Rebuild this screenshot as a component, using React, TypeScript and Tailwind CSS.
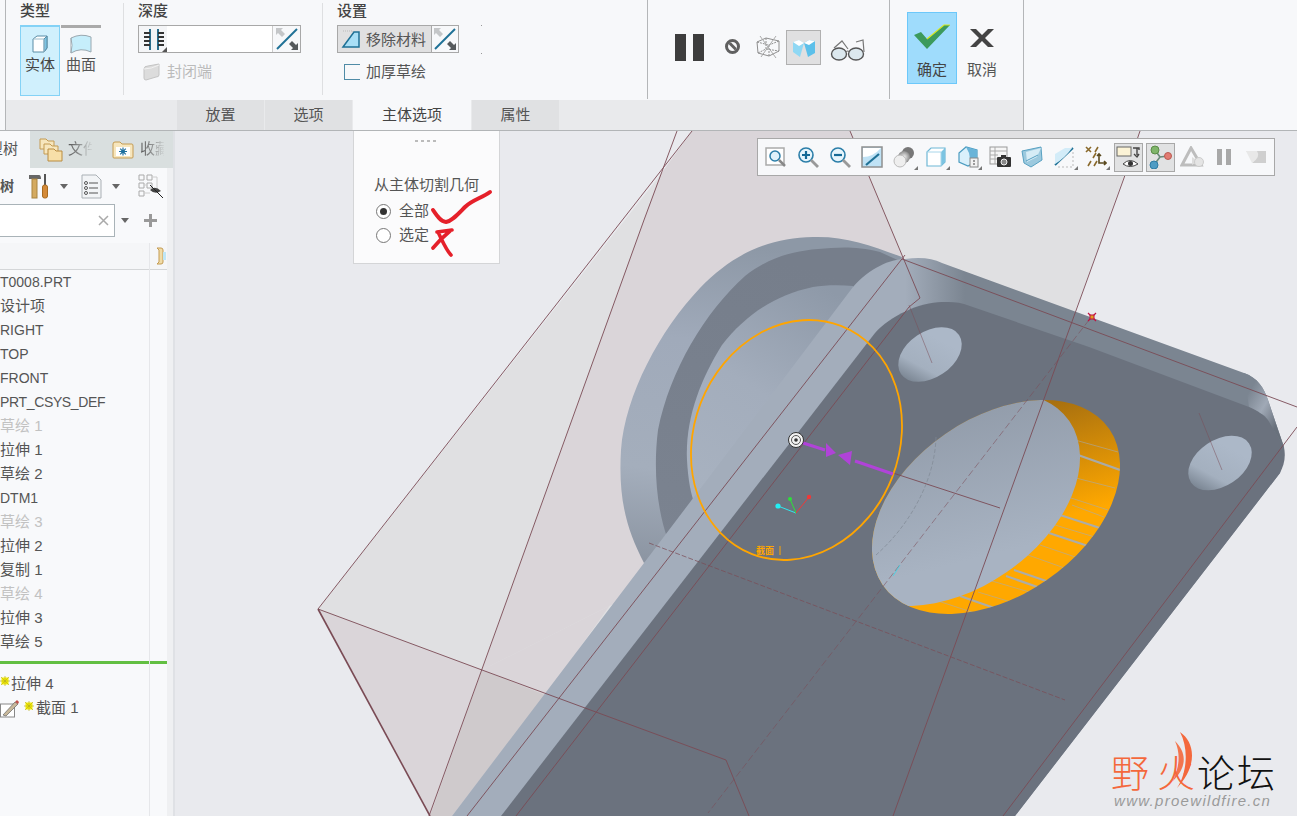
import React from "react";

const FONT = "[font-family:'Liberation_Sans','Noto_Sans_CJK_SC',sans-serif]";

function Flip() {
  return (
    <svg width="26" height="26" viewBox="0 0 26 26">
      <path d="M3 23 L23 3" stroke="#1f7196" strokeWidth="2" fill="none" />
      <path d="M2 2 L9 2 L7 4 L11 8 L8 11 L4 7 L2 9 Z" fill="#c4c6c8" />
      <path d="M24 24 L17 24 L19 22 L15 18 L18 15 L22 19 L24 17 Z" fill="#55595c" />
    </svg>
  );
}

function Caret({ className }: { className: string }) {
  return <div className={`border-x-[4px] border-t-[5px] border-x-transparent border-t-[#666] ${className}`} />;
}

function SolidIcon() {
  return (
    <svg width="20" height="20" viewBox="0 0 20 20">
      <path d="M3 5 L7 2 L17 2 L17 14 L14 18 L3 18 Z" fill="#fff" stroke="#5b8da6" />
      <path d="M14 5 L17 2 L17 14 L14 18 Z" fill="#7cc4e2" stroke="#5b8da6" />
      <path d="M3 5 L14 5 L14 18" fill="none" stroke="#9bbccb" />
    </svg>
  );
}

function SurfaceIcon() {
  return (
    <svg width="22" height="20" viewBox="0 0 22 20">
      <path d="M1 4 Q11 -1 21 3 L21 18 Q11 13 1 19 Z" fill="#c6eefb" stroke="#9aa8b0" />
      <path d="M1 4 Q3 11 1 19" fill="#fff" stroke="#9aa8b0" />
    </svg>
  );
}

function Depth() {
  return (
    <svg width="24" height="24" viewBox="0 0 24 24">
      <path d="M9 2 V23 M17 2 V23" stroke="#2c6e8c" strokeWidth="2" />
      <path d="M3 6H9M3 10H9M3 14H9M3 18H9M17 6H23M17 10H23M17 14H23M17 18H23" stroke="#333" strokeWidth="2" />
    </svg>
  );
}

function RemoveIcon() {
  return (
    <svg width="20" height="20" viewBox="0 0 20 20">
      <path d="M2 2 H12 V7" fill="none" stroke="#bbb" strokeDasharray="1 1" />
      <path d="M2 18 L13 3 H18 V18 Z" fill="#a9dff6" stroke="#1f7196" strokeWidth="1.5" />
    </svg>
  );
}

function Closed() {
  return (
    <svg width="18" height="18" viewBox="0 0 18 18">
      <path d="M1 6 Q1 3 5 3 L16 1 V12 Q16 14 13 14 L3 17 Q1 17 1 15 Z" fill="#dcdcdc" stroke="#c4c4c4" />
      <path d="M1 6 Q8 6 16 2" fill="none" stroke="#f2f2f2" />
    </svg>
  );
}

function Wire() {
  return (
    <svg width="26" height="24" viewBox="0 0 26 24" fill="none" stroke="#8f8f8f">
      <path d="M2 7 L11 3 L24 6 L24 16 L14 21 L3 18 Z" />
      <path d="M2 7 L14 10 L24 6 M14 10 V21 M11 3 V14 L3 18 M11 14 L24 16" strokeDasharray="2 1" />
      <path d="M5 1 L21 23 M21 1 L6 22" stroke="#aaa" />
    </svg>
  );
}

function Planes() {
  return (
    <svg width="24" height="20" viewBox="0 0 24 20">
      <path d="M1 4 L7 2 L12 5 L8 19 L1 14 Z" fill="#8fd8f4" />
      <path d="M12 5 L17 2 L23 3 L23 15 L16 19 Z" fill="#5cc0ea" />
      <path d="M1 4 L7 2 L12 5 L7 8 Z M12 5 L17 2 L23 3 L17 7 Z" fill="#fff" />
    </svg>
  );
}

function Glasses() {
  return (
    <svg width="36" height="24" viewBox="0 0 36 24" fill="none">
      <ellipse cx="9" cy="16" rx="7.5" ry="6" fill="#dce8ee" stroke="#555" strokeWidth="1.4" />
      <ellipse cx="26" cy="16" rx="7.5" ry="6" fill="#dce8ee" stroke="#555" strokeWidth="1.4" />
      <path d="M16 14 Q18 12 19 14 M4 10 L12 3 L18 11 M34 14 L33 2 L26 4" stroke="#777" strokeWidth="1.2" />
    </svg>
  );
}

const VIcons: React.ReactNode[] = [
  <svg key="1" width="22" height="22" viewBox="0 0 22 22" fill="none"><rect x="1" y="2" width="18" height="17" fill="#fff" stroke="#aaa" strokeWidth="1.5" /><circle cx="10" cy="10" r="5" fill="#dff2fb" stroke="#2b7ea8" strokeWidth="1.5" /><path d="M14 14 L20 20" stroke="#888" strokeWidth="2.5" /></svg>,
  <svg key="2" width="22" height="22" viewBox="0 0 22 22" fill="none"><circle cx="9" cy="9" r="7" fill="#e6f5fc" stroke="#2b7ea8" strokeWidth="1.6" /><path d="M5 9 H13 M9 5 V13" stroke="#156a96" strokeWidth="2.2" /><path d="M14 14 L21 21" stroke="#999" strokeWidth="2.8" /></svg>,
  <svg key="3" width="22" height="22" viewBox="0 0 22 22" fill="none"><circle cx="9" cy="9" r="7" fill="#e6f5fc" stroke="#2b7ea8" strokeWidth="1.6" /><path d="M5 9 H13" stroke="#156a96" strokeWidth="2.2" /><path d="M14 14 L21 21" stroke="#999" strokeWidth="2.8" /></svg>,
  <svg key="4" width="22" height="22" viewBox="0 0 22 22"><rect x="1" y="1" width="20" height="20" fill="#bfe2f5" stroke="#8f8f8f" strokeWidth="1.5" /><path d="M2 2 H20 Q12 11 2 11 Z" fill="#fff" /><path d="M5 19 L18 8" stroke="#1f7196" strokeWidth="2.2" /></svg>,
  <svg key="5" width="22" height="22" viewBox="0 0 22 22"><defs><radialGradient id="sph"><stop offset="0" stopColor="#f4f4f4" /><stop offset="1" stopColor="#8a8a8a" /></radialGradient></defs><circle cx="15" cy="7" r="6" fill="#777" /><circle cx="11" cy="11" r="6" fill="url(#sph)" /><circle cx="7" cy="15" r="6" fill="#eee" stroke="#bbb" /></svg>,
  <svg key="6" width="22" height="22" viewBox="0 0 22 22"><path d="M2 6 L6 2 L20 2 L20 16 L16 20 L2 20 Z" fill="#fff" stroke="#6fb7d6" strokeWidth="1.2" /><path d="M16 6 L20 2 L20 16 L16 20 Z" fill="#7cc4e2" /><path d="M2 6 H16 V20" fill="none" stroke="#a8d6ea" /></svg>,
  <svg key="7" width="22" height="22" viewBox="0 0 22 22"><path d="M2 7 L9 1 L20 4 L20 15 L11 20 L2 16 Z" fill="#d9f0fb" stroke="#4b9cc0" strokeWidth="1.2" /><path d="M9 1 L20 4 L20 13 L13 13 L12 7 Z" fill="#6ab4d8" /><rect x="13" y="12" width="8" height="9" fill="#f2f2f2" stroke="#888" /><path d="M16 15 H18 M16 18 H18" stroke="#444" /></svg>,
  <svg key="8" width="22" height="22" viewBox="0 0 22 22"><rect x="1" y="1" width="17" height="17" fill="#f6f6f6" stroke="#999" /><path d="M1 5 H18 M1 9 H9 M1 13 H9 M6 1 V18" stroke="#aaa" /><rect x="8" y="11" width="14" height="10" rx="1" fill="#333" /><rect x="12" y="9" width="5" height="3" fill="#333" /><circle cx="15" cy="16" r="3" fill="#888" stroke="#eee" /></svg>,
  <svg key="9" width="22" height="22" viewBox="0 0 22 22"><path d="M1 5 L20 1 L21 14 L10 21 L3 17 Z" fill="#9cc9de" stroke="#58a1c2" /><path d="M5 6 L20 2 L16 11 L6 16 Z" fill="#d6ecf6" /><path d="M5 15 L17 9" stroke="#58a1c2" /></svg>,
  <svg key="10" width="22" height="22" viewBox="0 0 22 22"><path d="M2 19 L20 2" stroke="#1f7196" strokeWidth="1.8" /><path d="M2 18 L2 8 L12 2 L19 2 Q12 12 2 18 Z" fill="#d3ecf8" /><path d="M5 21 H20 V6" stroke="#bbb" fill="none" strokeDasharray="2 2" /></svg>,
  <svg key="11" width="22" height="22" viewBox="0 0 22 22" stroke="#8a6a2c" strokeWidth="1.6" fill="none"><path d="M1 1 L6 6 M6 1 L1 6 M10 6 L13 1 M8 12 L11 7 M3 20 L6 15 M9 20 L12 15" /><path d="M14 8 V17 H21 M12 10 L14 8 L16 10 M19 15 L21 17 L19 19" stroke="#5a4a20" /></svg>,
  <svg key="12" width="24" height="24" viewBox="0 0 24 24"><rect x="1" y="2" width="14" height="9" fill="#fbf3d6" stroke="#666" /><path d="M17 3 H23 V5 M21 3 V10 M18 9 L21 12 L23 9" fill="none" stroke="#444" strokeWidth="1.4" /><path d="M7 19 Q14 12 22 19 Q14 24 7 19 Z" fill="#fff" stroke="#444" /><circle cx="14.5" cy="18.5" r="2.5" fill="#333" /></svg>,
  <svg key="13" width="24" height="24" viewBox="0 0 24 24"><path d="M7 5 L12 12 L6 20 M12 12 L20 11" stroke="#6b8a7a" strokeWidth="1.6" fill="none" /><circle cx="7" cy="5" r="4" fill="#7fb56a" stroke="#5a8c48" /><circle cx="20" cy="11" r="3.5" fill="#e27b72" stroke="#b85a52" /><circle cx="6" cy="20" r="4" fill="#4f9cc4" stroke="#2f7ca4" /></svg>,
  <svg key="14" width="24" height="22" viewBox="0 0 24 22"><path d="M11 2 L21 19 H2 Z" fill="none" stroke="#bdbdbd" strokeWidth="3" /><path d="M12 11 L18 15 L12 19 Z" fill="#ddd" /><circle cx="19" cy="16" r="4.5" fill="#e4e4e4" stroke="#ccc" /></svg>,
  <svg key="15" width="16" height="18" viewBox="0 0 16 18"><rect x="1" y="1" width="5" height="16" fill="#a8a8a8" /><rect x="10" y="1" width="5" height="16" fill="#a8a8a8" /></svg>,
  <svg key="16" width="22" height="18" viewBox="0 0 22 18"><path d="M1 3 H21 V15 H7 Q14 9 1 3 Z" fill="#cfcfcf" /><path d="M1 3 H12 Q16 9 7 15" fill="#e8e8e8" /></svg>,
];

const withMark = [4, 5, 6, 9, 10];

function ViewToolbar() {
  return (
    <div className="absolute left-[582px] top-[7px] flex h-[38px] w-[518px] items-center bg-[#f7f8fa] border border-[#a8a8a8] pl-[2px]">
      {VIcons.map((ic, i) => (
        <div key={i} className="relative flex h-[32px] w-[32px] shrink-0 items-center justify-center">
          {i === 11 || i === 12 ? (
            <div className="flex h-[29px] w-[29px] items-center justify-center bg-[#e1e2e3] border border-[#a8a8a8]">{ic}</div>
          ) : (
            ic
          )}
          {withMark.includes(i) ? (
            <div className="absolute bottom-[3px] right-[2px] border-b-[4px] border-l-[4px] border-b-[#777] border-l-transparent" />
          ) : null}
        </div>
      ))}
    </div>
  );
}

const stripes = [
  [1049, 533, 1091, 547], [1040, 545, 1084, 560], [1028, 555, 1070, 570], [1014, 570, 1052, 583],
  [992, 581, 1036, 594], [978, 592, 1024, 606], [960, 596, 1000, 610], [935, 600, 990, 618],
  [1075, 440, 1118, 452], [1078, 455, 1120, 470], [1076, 478, 1115, 488], [1068, 497, 1108, 510], [1060, 515, 1100, 528],
  [1072, 505, 1104, 517], [1055, 525, 1098, 538], [1006, 576, 1046, 590],
];

function Scene() {
  const L = "#7a4b55";
  return (
    <svg className="absolute inset-0 h-full w-full" viewBox="175 131 1122 685" preserveAspectRatio="none">
      <defs>
        <linearGradient id="bossG" gradientUnits="userSpaceOnUse" x1="700" y1="240" x2="660" y2="570">
          <stop offset="0" stopColor="#8d98a6" />
          <stop offset="0.3" stopColor="#a0aaba" />
          <stop offset="0.7" stopColor="#a4aebc" />
          <stop offset="1" stopColor="#8a93a0" />
        </linearGradient>
        <linearGradient id="ringG" gradientUnits="userSpaceOnUse" x1="750" y1="250" x2="660" y2="550">
          <stop offset="0" stopColor="#767e8b" />
          <stop offset="1" stopColor="#7b8390" />
        </linearGradient>
        <linearGradient id="innerG" gradientUnits="userSpaceOnUse" x1="830" y1="290" x2="700" y2="500">
          <stop offset="0" stopColor="#8e99a8" />
          <stop offset="0.5" stopColor="#a3adbc" />
          <stop offset="1" stopColor="#a8b2c0" />
        </linearGradient>
        <linearGradient id="bandG" gradientUnits="userSpaceOnUse" x1="905" y1="0" x2="965" y2="0">
          <stop offset="0" stopColor="#a3adbb" />
          <stop offset="1" stopColor="#7b8591" />
        </linearGradient>
        <linearGradient id="holeG" gradientUnits="userSpaceOnUse" x1="1000" y1="400" x2="940" y2="560">
          <stop offset="0" stopColor="#8f99a7" />
          <stop offset="1" stopColor="#a8b3c2" />
        </linearGradient>
        <linearGradient id="orG" gradientUnits="userSpaceOnUse" x1="1060" y1="400" x2="1090" y2="510">
          <stop offset="0" stopColor="#a8700f" />
          <stop offset="1" stopColor="#ffa800" />
        </linearGradient>
        <linearGradient id="h1G" gradientUnits="userSpaceOnUse" x1="897" y1="370" x2="945" y2="345">
          <stop offset="0" stopColor="#747f8c" />
          <stop offset="0.4" stopColor="#a4b0bf" />
          <stop offset="1" stopColor="#acb8c8" />
        </linearGradient>
        <linearGradient id="h2G" gradientUnits="userSpaceOnUse" x1="1187" y1="478" x2="1235" y2="453">
          <stop offset="0" stopColor="#747f8c" />
          <stop offset="0.4" stopColor="#a4b0bf" />
          <stop offset="1" stopColor="#acb8c8" />
        </linearGradient>
        <linearGradient id="cornerG" gradientUnits="userSpaceOnUse" x1="1250" y1="390" x2="1285" y2="410">
          <stop offset="0" stopColor="#7b8591" />
          <stop offset="0.5" stopColor="#a0a9b6" />
          <stop offset="1" stopColor="#69717c" />
        </linearGradient>
        <clipPath id="bigHole">
          <ellipse cx="996" cy="507" rx="137.5" ry="89" transform="rotate(-34.5 996 507)" />
        </clipPath>
      </defs>

      <rect x="175" y="131" width="1122" height="685" fill="#e9eaee" />
      <path d="M318 609 L695 131 L1140 131 L893 816 L430 816 Z" fill="#e0e0e2" />
      <path d="M660 175 L692 131 L850 131 L920 298 L700 560 L482 670 Z" fill="#dad5d9" />
      <path d="M482 670 L318 609 L430 816 Z" fill="#dad5d9" />
      <path d="M482 670 L700 560 L640 563 L460 816 L430 816 Z" fill="#dad5d9" />
      <path d="M482 670 L545 695 L452 816 L430 816 Z" fill="#cfcacc" />

      {/* boss */}
      <path d="M902 257 C870 245 845 236 813 237 C770 238 735 252 700 288 C660 330 625 395 621 450 C618 500 627 530 644 563 L700 540 L860 400 Z" fill="url(#bossG)" />
      <path d="M902 262 L880 252 C860 247 845 247 831 248 C800 250 775 253 745 276 C705 312 670 370 658 430 C653 470 657 510 668 540 L860 400 Z" fill="url(#ringG)" />
      <path d="M853 286 C840 285 825 285 813 287 C775 295 745 315 722 345 C700 380 685 420 687 460 C688 480 691 495 695 505 L870 380 Z" fill="url(#innerG)" />

      {/* outer silhouette: rib and edge band */}
      <path d="M452 816 L644 563 L853 287 C870 268 890 259 905 259 C920 257 932 258 942 263 L1244 373 C1258 378 1264 388 1268 400 L1284 447 L1280 473 L1015 816 Z" fill="url(#bandG)" />
      <path d="M1244 373 C1258 378 1264 388 1268 400 L1284 447 L1265 416 L1249 407 Z" fill="url(#cornerG)" />

      {/* plate face */}
      <path d="M501 816 L875 333 C890 316 920 302 942 302 C950 302 957 302 964 304 L1089 347 L1249 407 C1258 411 1264 415 1268 420 L1284 447 C1286 458 1284 465 1280 473 L1015 816 Z" fill="#6b727e" />

      {/* big hole */}
      <g clipPath="url(#bigHole)">
        <rect x="860" y="390" width="270" height="240" fill="url(#orG)" />
        {stripes.map((s, i) => (
          <line key={i} x1={s[0]} y1={s[1]} x2={s[2]} y2={s[3]} stroke="#a3adba" strokeWidth={i % 3 === 0 ? 2.2 : 1} opacity={i % 3 === 0 ? 0.9 : 0.55} />
        ))}
        <ellipse cx="956" cy="499" rx="137.5" ry="89" transform="rotate(-34.5 956 499)" fill="url(#holeG)" />
      </g>

      {/* small holes */}
      <ellipse cx="930" cy="354.5" rx="35" ry="23" transform="rotate(-34 930 354.5)" fill="url(#h1G)" />
      <ellipse cx="1220" cy="463" rx="35" ry="23" transform="rotate(-34 1220 463)" fill="url(#h2G)" />

      {/* datum lines */}
      <g fill="none" stroke={L} strokeWidth="0.9">
        <path d="M318 609 L692 131" />
        <path d="M429 816 L644 220 L677 131" />
        <path d="M318 609 L482 670 L726 760 L749 816" />
        <path d="M318 609 L430 816" strokeWidth="1.6" />
        <path d="M850 131 L920 298 L909 307" />
        <path d="M516 816 L909 307" />
        <path d="M467 816 L905 255" />
        <path d="M902 259 L1297 407" />
        <path d="M1140 131 L1124 178 L893 816" />
        <path d="M1297 427 L1003 816" />
        <path d="M649 543 L1065 700" strokeDasharray="5 2" opacity="0.8" />
        <path d="M893 473 L1000 508" />
        <path d="M1089 320 L708 813" strokeDasharray="7 3" opacity="0.6" />
        <path d="M909 305 L932 363" opacity="0.55" />
        <path d="M1199 413 L1222 470" opacity="0.55" />
      </g>
      <path d="M936 437 C935 480 910 525 876 555" fill="none" stroke="#7f8894" strokeWidth="0.7" strokeDasharray="4 2" />
      <path d="M900 565 L893 576" stroke="#38d8e8" strokeWidth="0.8" />

      {/* sketch */}
      <ellipse cx="796.5" cy="440" rx="122.4" ry="102.7" transform="rotate(-68.7 796.5 440)" fill="none" stroke="#ffa500" strokeWidth="1.8" />
      <text x="756" y="554" fontSize="9" fontWeight="700" fill="#ffa500" fontFamily="'Noto Sans CJK SC',sans-serif">截面</text>
      <path d="M780 546 V555" stroke="#ffa500" strokeWidth="1" />

      {/* arrows */}
      <path d="M797 441 L825 450 M893 474 L855 461" stroke="#b043d8" strokeWidth="3" />
      <path d="M836 453 L826 443 L826 457 Z M838 455 L852 451 L850 465 Z" fill="#b043d8" />
      <circle cx="796" cy="440" r="7.5" fill="#f2f2f2" stroke="#333" strokeWidth="1" />
      <circle cx="796" cy="440" r="4.5" fill="none" stroke="#555" strokeWidth="1" />
      <circle cx="796" cy="440" r="1.8" fill="#333" />

      {/* triad */}
      <path d="M796 513 L778 506" stroke="#2fe8ee" />
      <path d="M796 513 L790 499" stroke="#2ce03a" />
      <path d="M796 513 L809 497" stroke="#f03838" />
      <circle cx="778" cy="506" r="2.6" fill="#22f0f4" />
      <circle cx="790" cy="499" r="2" fill="#2ce03a" />
      <circle cx="809" cy="497" r="2.2" fill="#f03838" />

      {/* datum point */}
      <path d="M1088 313 L1096 321 M1096 313 L1088 321" stroke="#c01040" strokeWidth="1.2" />
      <rect x="1090" y="315" width="4" height="4" fill="#e0a020" stroke="#c01040" />
    </svg>
  );
}

function Handwriting() {
  return (
    <svg className="absolute left-[250px] top-[55px]" width="70" height="75" viewBox="425 186 70 75">
      <path d="M433 210 C437 216 441 222 446 222 C452 221 458 214 465 207 C472 200 482 198 490 192" fill="none" stroke="#e5202a" strokeWidth="4" strokeLinecap="round" />
      <path d="M437 232 L452 230 M450 231 C444 236 438 242 433 248 M438 232 C442 240 446 250 451 255" fill="none" stroke="#e5202a" strokeWidth="3.6" strokeLinecap="round" />
    </svg>
  );
}

function Watermark() {
  const cjk = "text-[38px] leading-[36px] [font-family:'Noto_Sans_CJK_SC',sans-serif] font-light block mt-[22px]";
  return (
    <div className="absolute left-[936px] top-[600px] h-[80px] w-[180px]">
      <div className="flex items-start">
        <span className={`${cjk} w-[43px] text-[#f4683c]`}>野</span>
        <span className={`${cjk} ml-[3px] w-[40px] text-[#f4683c]`}>火</span>
        <span className={`${cjk} w-[40px] text-[#111]`}>论</span>
        <span className={`${cjk} w-[40px] text-[#111]`}>坛</span>
      </div>
      <div className="absolute left-[3px] top-[62px] whitespace-nowrap text-[15px] italic leading-[15px] tracking-[1.3px] text-[#9a9a9a] [font-family:'Liberation_Sans',sans-serif]">www.proewildfire.cn</div>
      <svg className="absolute left-[52px] top-0" width="36" height="58" viewBox="0 0 36 58">
        <path d="M17 1 C33 12 34 36 14 57 C24 42 26 18 17 1 Z" fill="#f4683c" />
        <path d="M12 10 C24 22 24 36 10 50 C16 36 18 24 12 10 Z" fill="#f4683c" opacity="0.9" />
      </svg>
    </div>
  );
}

function Popup() {
  return (
    <div className={`absolute left-[178px] top-0 h-[133px] w-[147px] border border-t-0 border-[#d4d5d7] bg-[#fbfbfc] text-[15px] text-[#555] ${FONT}`}>
      <div className="flex justify-center gap-[3px] pr-[2px] pt-[9px]">
        <div className="h-[2px] w-[3px] bg-[#bbb]" />
        <div className="h-[2px] w-[3px] bg-[#bbb]" />
        <div className="h-[2px] w-[3px] bg-[#bbb]" />
        <div className="h-[2px] w-[3px] bg-[#bbb]" />
      </div>
      <div className="pl-[20px] pt-[32px] leading-[22px]">从主体切割几何</div>
      <div className="mt-[3px] flex h-[24px] items-center gap-[8px] pl-[22px]">
        <div className="flex h-[15px] w-[15px] items-center justify-center rounded-full border-[1.5px] border-[#777] bg-white">
          <div className="h-[7px] w-[7px] rounded-full bg-[#333]" />
        </div>
        <span>全部</span>
      </div>
      <div className="flex h-[24px] items-center gap-[8px] pl-[22px]">
        <div className="h-[15px] w-[15px] rounded-full border-[1.5px] border-[#777] bg-white" />
        <span>选定</span>
      </div>
    </div>
  );
}

function Ribbon() {
  return (
    <div className={`h-[131px] shrink-0 border-b-[1.5px] border-[#b2b5b7] bg-[#f7f8fa] pl-[5px] text-[15px] text-[#555] ${FONT}`}>
      <div className="flex h-full w-[1019px] flex-col border-x border-[#b4b6b8]">
        <div className="flex h-[100px]">
          {/* type */}
          <div className="relative w-[118px] pl-[14px]">
            <div className="h-[25px] pt-[2px] font-medium leading-[18px] text-[#444]">类型</div>
            <div className="flex gap-[1px]">
              <div className="flex h-[71px] w-[40px] flex-col items-center border border-t-[2px] border-[#84d2f6] bg-[#d0f0fd] pt-[7px] text-[#444]">
                <SolidIcon />
                <div className="mt-[1px] leading-[20px]">实体</div>
              </div>
              <div className="flex h-[71px] w-[40px] flex-col items-center border-t-[3px] border-[#aaa] pt-[6px]">
                <SurfaceIcon />
                <div className="mt-[1px] leading-[20px]">曲面</div>
              </div>
            </div>
            <div className="absolute right-0 top-[3px] h-[92px] w-px bg-[#dedfe1]" />
          </div>
          {/* depth */}
          <div className="relative w-[199px] pl-[14px]">
            <div className="h-[25px] pt-[2px] font-medium leading-[18px] text-[#444]">深度</div>
            <div className="flex h-[28px] w-[163px] items-center border border-[#a8a8a8] bg-white">
              <div className="relative flex h-full w-[28px] items-center justify-center bg-[#f4f5f7]">
                <Depth />
                <div className="absolute bottom-0 right-0 border-b-[5px] border-l-[5px] border-b-[#555] border-l-transparent" />
              </div>
              <div className="flex-1" />
              <div className="flex h-full w-[28px] items-center justify-center border-l border-[#ccc] bg-[#f7f8fa]">
                <Flip />
              </div>
            </div>
            <div className="mt-[9px] flex items-center gap-[6px] pl-[5px] text-[#bbb]">
              <Closed />
              <span className="leading-[20px]">封闭端</span>
            </div>
            <div className="absolute right-0 top-[3px] h-[92px] w-px bg-[#dedfe1]" />
          </div>
          {/* settings */}
          <div className="relative w-[325px] pl-[14px]">
            <div className="h-[25px] pt-[2px] font-medium leading-[18px] text-[#444]">设置</div>
            <div className="flex h-[28px] w-[122px] items-center border border-[#a8a8a8]">
              <div className="flex h-full w-[94px] items-center gap-[5px] border-r border-[#a8a8a8] bg-[#e0e0e1] pl-[3px]">
                <RemoveIcon />
                <span className="mt-[1px] leading-[20px]">移除材料</span>
              </div>
              <div className="flex h-full flex-1 items-center justify-center">
                <Flip />
              </div>
            </div>
            <div className="mt-[9px] flex items-center gap-[6px] pl-[7px]">
              <div className="h-[16px] w-[16px] border-y-[1.5px] border-l-[1.5px] border-[#4f8ba6]" />
              <span className="leading-[20px]">加厚草绘</span>
            </div>
            <div className="absolute left-[158px] top-[25px] h-px w-px bg-[#999]" />
            <div className="absolute left-[158px] top-[53px] h-px w-px bg-[#999]" />
            <div className="absolute right-0 top-0 h-[99px] w-px bg-[#b4b6b8]" />
          </div>
          {/* display */}
          <div className="relative flex w-[242px] items-start pl-[27px] pt-[30px]">
            <div className="mt-[4px] flex h-[27px] w-[29px] justify-between">
              <div className="h-full w-[11px] bg-[#3d3d3d]" />
              <div className="h-full w-[11px] bg-[#3d3d3d]" />
            </div>
            <div className="relative ml-[21px] mt-[9px] h-[15px] w-[15px] overflow-hidden rounded-full border-[3px] border-[#606060]">
              <div className="absolute left-[-3px] top-[3px] h-[3px] w-[16px] rotate-45 bg-[#606060]" />
            </div>
            <div className="ml-[15px] mt-[5px]"><Wire /></div>
            <div className="ml-[5px] flex h-[35px] w-[35px] items-center justify-center border border-[#b0b0b0] bg-[#e0e0e1]"><Planes /></div>
            <div className="ml-[9px] mt-[8px]"><Glasses /></div>
            <div className="absolute right-0 top-0 h-[99px] w-px bg-[#b4b6b8]" />
          </div>
          {/* ok */}
          <div className="flex flex-1 items-start gap-[10px] pl-[17px] pt-[12px]">
            <div className="flex h-[72px] w-[50px] flex-col items-center border border-[#6cc8fa] bg-[#9fdcfc] text-[#444]">
              <svg className="mt-[11px]" width="38" height="26" viewBox="0 0 38 26">
                <path d="M1 11 L8 8 L14 15 L31 1 L37 1 L14 25 Z" fill="#3c9a5c" />
                <path d="M14 15 L31 1 L37 1" fill="none" stroke="#d8e820" strokeWidth="1.2" />
              </svg>
              <div className="mt-[10px] leading-[20px]">确定</div>
            </div>
            <div className="flex w-[30px] flex-col items-center pt-[16px]">
              <svg width="26" height="20" viewBox="0 0 26 20">
                <path d="M1 1 H7 L13 7 L19 1 H25 L16 10 L25 19 H19 L13 13 L7 19 H1 L10 10 Z" fill="#444" />
              </svg>
              <div className="mt-[12px] leading-[20px]">取消</div>
            </div>
          </div>
        </div>
        {/* tabs */}
        <div className="mt-[1px] flex flex-1 gap-[1px] bg-[#e9eaec] pl-[171px] leading-[30px]">
          <div className="w-[87px] bg-[#e0e1e3] text-center">放置</div>
          <div className="w-[87px] bg-[#e0e1e3] text-center">选项</div>
          <div className="w-[118px] bg-[#f7f8fa] text-center text-[#444]">主体选项</div>
          <div className="w-[87px] bg-[#e0e1e3] text-center">属性</div>
        </div>
      </div>
    </div>
  );
}

function Folder() {
  return (
    <svg width="22" height="22" viewBox="0 0 22 22">
      <path d="M1 5 Q1 3 3 3 H8 L10 5 H20 Q21 5 21 7 V18 Q21 19 20 19 H2 Q1 19 1 18 Z" fill="#f7e6bd" stroke="#c49b52" />
      <rect x="4" y="8" width="14" height="9" fill="#fff" />
      <path d="M11 8.5 V16.5 M7 12.5 H15 M8.2 9.7 L13.8 15.3 M13.8 9.7 L8.2 15.3" stroke="#1e6f9e" strokeWidth="1.2" />
      <circle cx="11" cy="12.5" r="1.8" fill="#1e6f9e" />
    </svg>
  );
}

function Folders() {
  return (
    <svg width="24" height="26" viewBox="0 0 24 26">
      <path d="M1 2 H7 L9 4 H15 V12 H1 Z" fill="#f7e6bd" stroke="#c49b52" />
      <path d="M5 7 H11 L13 9 H19 V17 H5 Z" fill="#f7e6bd" stroke="#c49b52" />
      <path d="M9 12 H15 L17 14 H23 V24 H9 Z" fill="#f7dfa8" stroke="#b98c40" />
    </svg>
  );
}

type Row = { t: string; off?: boolean; latin?: boolean };
const rows: Row[] = [
  { t: "T0008.PRT", latin: true },
  { t: "设计项" },
  { t: "RIGHT", latin: true },
  { t: "TOP", latin: true },
  { t: "FRONT", latin: true },
  { t: "PRT_CSYS_DEF", latin: true },
  { t: "草绘 1", off: true },
  { t: "拉伸 1" },
  { t: "草绘 2" },
  { t: "DTM1", latin: true },
  { t: "草绘 3", off: true },
  { t: "拉伸 2" },
  { t: "复制 1" },
  { t: "草绘 4", off: true },
  { t: "拉伸 3" },
  { t: "草绘 5" },
];

function Star() {
  return (
    <svg width="10" height="10" viewBox="0 0 10 10">
      <rect x="1.5" y="1.5" width="7" height="7" fill="#f8f000" />
      <path d="M5 0 V10 M0 5 H10 M1 1 L9 9 M9 1 L1 9" stroke="#b8b020" strokeWidth="0.7" />
    </svg>
  );
}

function LeftPanel() {
  return (
    <div className={`flex h-full w-[175px] shrink-0 flex-col overflow-hidden border-r-2 border-[#dfe1e5] bg-[#eff0f2] text-[15px] text-[#555] ${FONT}`}>
      <div className="flex h-[37px] shrink-0 items-center bg-[#d9dfdf]">
        <div className="flex h-full w-[30px] shrink-0 items-center overflow-hidden bg-[#f8f9fb]">
          <span className="-ml-[12px] whitespace-nowrap">型树</span>
        </div>
        <div className="ml-[9px]"><Folders /></div>
        <span className="ml-[5px] w-[24px] whitespace-nowrap bg-linear-to-r from-[#555] to-[#d0d5d5] bg-clip-text text-transparent">文件</span>
        <div className="ml-[20px]"><Folder /></div>
        <span className="ml-[6px] w-[24px] whitespace-nowrap bg-linear-to-r from-[#555] to-[#d0d5d5] bg-clip-text text-transparent">收藏</span>
      </div>
      <div className="flex h-[36px] w-[167px] shrink-0 items-center bg-[#f8f9fb]">
        <span className="w-[28px] shrink-0 overflow-hidden text-[14px] font-bold">树</span>
        <svg width="22" height="26" viewBox="0 0 22 26">
          <path d="M1 2 H11 Q13 2 13 6 H1 Z" fill="#666" />
          <rect x="4" y="6" width="5" height="19" fill="#d4aa60" stroke="#a98440" />
          <rect x="16" y="1" width="2" height="11" fill="#555" />
          <rect x="14.5" y="12" width="5" height="13" rx="2" fill="#d48a38" stroke="#a86a20" />
        </svg>
        <Caret className="ml-[10px]" />
        <svg className="ml-[13px]" width="21" height="25" viewBox="0 0 21 25">
          <path d="M1 1 H15 L20 6 V24 H1 Z" fill="#f2f4f6" stroke="#aab0b5" />
          <circle cx="5" cy="9" r="1.5" fill="none" stroke="#555" />
          <circle cx="5" cy="14" r="1.5" fill="none" stroke="#555" />
          <circle cx="5" cy="19" r="1.5" fill="none" stroke="#555" />
          <path d="M8 9 H17 M8 14 H17 M8 19 H17" stroke="#555" />
        </svg>
        <Caret className="ml-[10px]" />
        <svg className="ml-[17px]" width="26" height="26" viewBox="0 0 26 26" fill="none">
          <path d="M2 2 H7 V7 H2 Z M2 10 H7 V15 H2 Z M2 18 H7 V23 H2 Z M10 10 H15 V15 H10 Z M10 2 H15 V7 H10 Z" stroke="#aaa" />
          <path d="M15 4 H20 V16 M7 12 H10 M7 20 H13" stroke="#ccc" />
          <path d="M13 17 Q18 12 24 18 Q18 22 13 17 Z" fill="#444" />
          <path d="M13 12 L26 25" stroke="#222" />
        </svg>
      </div>
      <div className="flex h-[33px] w-[167px] shrink-0 items-center bg-[#f8f9fb]">
        <div className="flex h-[33px] w-[115px] items-center justify-end border border-l-0 border-[#a9b3b8] bg-white pr-[5px]">
          <svg width="11" height="11" viewBox="0 0 11 11"><path d="M1 1 L10 10 M10 1 L1 10" stroke="#aaa" strokeWidth="1.5" /></svg>
        </div>
        <Caret className="ml-[6px]" />
        <svg className="ml-[14px]" width="15" height="15" viewBox="0 0 15 15"><path d="M7.5 1 V14 M1 7.5 H14" stroke="#999" strokeWidth="3" /></svg>
      </div>
      <div className="h-[6px] w-[167px] shrink-0 bg-[#f8f9fb]" />
      <div className="relative flex w-[167px] flex-1 flex-col bg-[#f8f9fb]">
        <div className="flex h-[27px] shrink-0 items-center justify-end border-b border-[#d4d6d8] bg-[#f5f6f8] pr-[1px]">
          <svg width="9" height="18" viewBox="0 0 9 18">
            <path d="M0 1 H4 Q6 1 6 3 V15 Q6 17 4 17 H0 L2 15 V3 Z" fill="#f0dca8" stroke="#c49b52" />
            <rect x="6" y="5" width="3" height="8" fill="#bfe6f5" />
          </svg>
        </div>
        {rows.map((r) => (
          <div
            key={r.t}
            className={`h-[24px] shrink-0 whitespace-nowrap leading-[24px] ${r.latin ? "text-[14px]" : ""} ${r.off ? "text-[#c2c2c2]" : ""} ${r.t === "PRT_CSYS_DEF" ? "tracking-[-0.35px]" : ""}`}
          >
            {r.t}
          </div>
        ))}
        <div className="mt-[7px] h-[2.5px] shrink-0 bg-[#62bf42]" />
        <div className="mt-[9px] flex h-[24px] shrink-0 items-center">
          <div className="-mt-[7px]"><Star /></div>
          <span className="ml-[1px]">拉伸 4</span>
        </div>
        <div className="flex h-[24px] shrink-0 items-center">
          <svg width="20" height="20" viewBox="0 0 20 20">
            <rect x="0.5" y="5" width="14" height="13" fill="#fff" stroke="#888" />
            <path d="M3 16 L15 3 L18 5 L6 17 Z" fill="#c8b89a" stroke="#666" strokeWidth="0.7" />
            <path d="M15 3 L17 1 L19 3 L18 5 Z" fill="#c0504a" />
          </svg>
          <div className="-mt-[5px] ml-[4px]"><Star /></div>
          <span className="ml-[2px]">截面 1</span>
        </div>
        <div className="absolute bottom-0 left-[149px] top-0 w-px bg-[#e6e7ea]" />
      </div>
    </div>
  );
}

export default function App() {
  return (
    <div className="flex h-[816px] w-[1297px] flex-col overflow-hidden bg-[#e9eaee]">
      <Ribbon />
      <div className="flex min-h-0 flex-1">
        <LeftPanel />
        <div className="relative flex-1 overflow-hidden">
          <Scene />
          <ViewToolbar />
          <Popup />
          <Handwriting />
          <Watermark />
        </div>
      </div>
    </div>
  );
}
